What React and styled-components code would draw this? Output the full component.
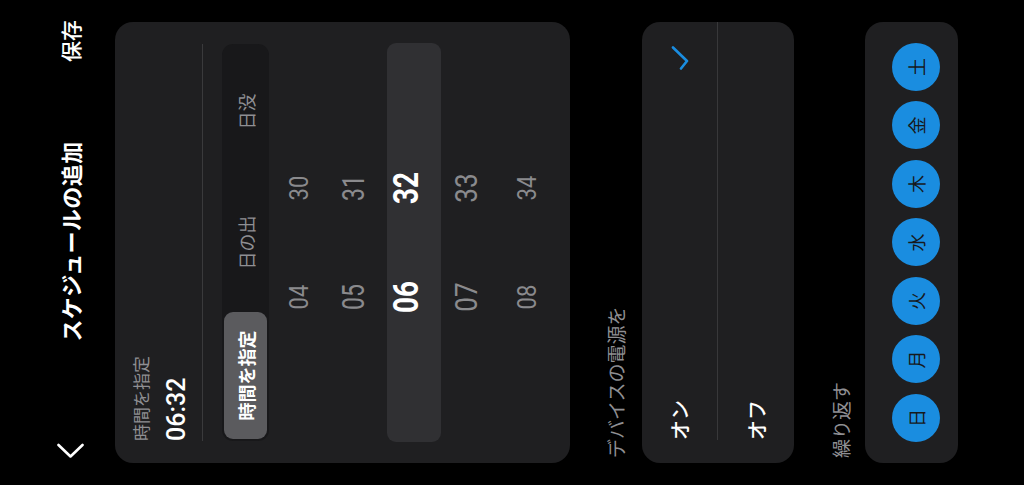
import React from "react";
import styled, { createGlobalStyle } from "styled-components";

const Global = createGlobalStyle`
  html, body { margin: 0; padding: 0; background: #000; overflow: hidden; }
  body { font-family: Roboto, "Noto Sans CJK JP", sans-serif; }
  * { box-sizing: border-box; }
`;

const Stage = styled.div`
  width: 1024px;
  height: 485px;
  overflow: hidden;
  background: #000;
`;

const Screen = styled.div`
  width: 485px;
  height: 1024px;
  background: #000;
  transform-origin: 0 0;
  transform: translateY(485px) rotate(-90deg);
  display: flex;
  flex-direction: column;
  font-family: Roboto, "Noto Sans CJK JP", sans-serif;
`;

const Header = styled.header`
  height: 115px;
  padding: 25px 20px 0 22px;
  display: grid;
  grid-template-columns: 1fr auto 1fr;
  align-items: center;
  flex-shrink: 0;
`;

const BackButton = styled.button`
  justify-self: start;
  background: none;
  border: 0;
  padding: 0;
  width: 24px;
  height: 30px;
  display: flex;
  align-items: center;
  justify-content: center;
`;

const Title = styled.h1`
  margin: 0;
  color: #fff;
  font-family: "Noto Sans CJK JP", sans-serif;
  font-size: 22px;
  font-weight: 700;
  letter-spacing: 0.4px;
`;

const SaveButton = styled.button`
  justify-self: end;
  background: none;
  border: 0;
  padding: 0;
  color: #fff;
  font-family: "Noto Sans CJK JP", sans-serif;
  font-size: 21px;
  font-weight: 500;
`;

const Content = styled.main`
  padding: 0 22px;
  display: flex;
  flex-direction: column;
  height: 845px;
  overflow: hidden;
`;

const Card = styled.section`
  background: #1f1f21;
  border-radius: 18px;
  padding: ${(p) => p.$pad || "0"};
  flex-shrink: 0;
`;

const SectionLabel = styled.div`
  color: #8f8f93;
  font-family: "Noto Sans CJK JP", sans-serif;
  font-size: 19px;
  line-height: 24px;
  padding: ${(p) => p.$pad || "34px 0 14px 5px"};
`;

const TimeHead = styled.div`
  display: flex;
  flex-direction: column;
  gap: 11px;
  padding-bottom: 11px;
  border-bottom: 1px solid #3a3a3c;
`;

const SmallLabel = styled.div`
  color: #8f8f93;
  font-family: "Noto Sans CJK JP", sans-serif;
  font-size: 17px;
  line-height: 22px;
`;

const TimeValue = styled.div`
  color: #fff;
  font-family: Roboto, sans-serif;
  font-size: 25px;
  font-weight: 500;
  line-height: 28px;
`;

const Segmented = styled.div`
  margin-top: 19px;
  height: 47px;
  background: #18181a;
  border-radius: 11px;
  padding: 2px;
  display: grid;
  grid-template-columns: repeat(3, 1fr);
`;

const Segment = styled.div`
  border-radius: 9px;
  display: flex;
  align-items: center;
  justify-content: center;
  font-family: "Noto Sans CJK JP", sans-serif;
  font-size: 18px;
  font-weight: ${(p) => (p.$active ? 700 : 400)};
  color: ${(p) => (p.$active ? "#fff" : "#8f8f93")};
  background: ${(p) => (p.$active ? "#5b5b5e" : "transparent")};
  margin-right: ${(p) => (p.$active ? "4px" : "0")};
`;

const Picker = styled.div`
  position: relative;
  margin-top: 1px;
  height: 285px;
  display: flex;
  justify-content: center;
  gap: 29px;
`;

const Highlight = styled.div`
  position: absolute;
  left: -1px;
  right: -1px;
  top: 117px;
  height: 54px;
  background: #303033;
  border-radius: 9px;
`;

const Column = styled.div`
  position: relative;
  width: 80px;
  display: flex;
  flex-direction: column;
`;

const Cell = styled.div`
  height: 57px;
  display: flex;
  align-items: center;
  justify-content: center;
`;

const Num = styled.span`
  display: inline-block;
  font-family: Roboto, sans-serif;
  font-size: ${(p) => p.$size}px;
  font-weight: ${(p) => (p.$active ? 700 : 400)};
  color: ${(p) => (p.$active ? "#fff" : "#8a8a8d")};
  transform: translateY(${(p) => p.$dy}px) scaleY(${(p) => p.$sy});
  line-height: 1;
`;

const OptionRow = styled.div`
  height: ${(p) => p.$h}px;
  margin-left: 23px;
  padding-right: 24px;
  display: flex;
  align-items: center;
  justify-content: space-between;
  border-bottom: ${(p) => (p.$divider ? "1px solid #38383a" : "none")};
`;

const OptionText = styled.span`
  color: #fff;
  font-family: "Noto Sans CJK JP", sans-serif;
  font-size: 20px;
  font-weight: 500;
`;

const Days = styled.div`
  display: flex;
  justify-content: space-between;
`;

const Day = styled.div`
  width: 48px;
  height: 48px;
  border-radius: 50%;
  background: #1a8de0;
  color: #17191c;
  display: flex;
  align-items: center;
  justify-content: center;
  font-family: "Noto Sans CJK JP", sans-serif;
  font-size: 18px;
`;

const hours = ["04", "05", "06", "07", "08"];
const mins = ["30", "31", "32", "33", "34"];
const style = [
  { size: 22, sy: 1.15, dy: 1 },
  { size: 23, sy: 1.35, dy: -2 },
  { size: 28, sy: 1.25, dy: -6, active: true },
  { size: 26, sy: 1.2, dy: -4 },
  { size: 22, sy: 1.15, dy: 1 },
];

const Wheel = ({ items }) => (
  <Column>
    {items.map((v, i) => (
      <Cell key={v}>
        <Num $size={style[i].size} $sy={style[i].sy} $dy={style[i].dy} $active={style[i].active}>
          {v}
        </Num>
      </Cell>
    ))}
  </Column>
);

export default function App() {
  return (
    <>
      <Global />
      <Stage>
        <Screen>
          <Header>
            <BackButton aria-label="戻る">
              <svg width="16" height="27" viewBox="0 0 16 27" fill="none">
                <path d="M14 1.5 L2.5 13.5 L14 25.5" stroke="#fff" strokeWidth="2.6" strokeLinecap="round" strokeLinejoin="round" />
              </svg>
            </BackButton>
            <Title>スケジュールの追加</Title>
            <SaveButton>保存</SaveButton>
          </Header>
          <Content>
            <Card $pad="15px 22px 15px 22px">
              <TimeHead>
                <SmallLabel>時間を指定</SmallLabel>
                <TimeValue>06:32</TimeValue>
              </TimeHead>
              <Segmented>
                <Segment $active>時間を指定</Segment>
                <Segment>日の出</Segment>
                <Segment>日没</Segment>
              </Segmented>
              <Picker>
                <Highlight />
                <Wheel items={hours} />
                <Wheel items={mins} />
              </Picker>
            </Card>
            <SectionLabel>デバイスの電源を</SectionLabel>
            <Card>
              <OptionRow $h={76} $divider>
                <OptionText>オン</OptionText>
                <svg width="24" height="18" viewBox="0 0 24 18" fill="none">
                  <path d="M1.5 10 L9 16 L22.5 2" stroke="#1a8de0" strokeWidth="2.6" strokeLinecap="round" strokeLinejoin="round" />
                </svg>
              </OptionRow>
              <OptionRow $h={76}>
                <OptionText>オフ</OptionText>
              </OptionRow>
            </Card>
            <SectionLabel $pad="35px 0 12px 5px">繰り返す</SectionLabel>
            <Card $pad="27px 21px 18px 21px">
              <Days>
                {["日", "月", "火", "水", "木", "金", "土"].map((d) => (
                  <Day key={d}>{d}</Day>
                ))}
              </Days>
            </Card>
          </Content>
        </Screen>
      </Stage>
    </>
  );
}
